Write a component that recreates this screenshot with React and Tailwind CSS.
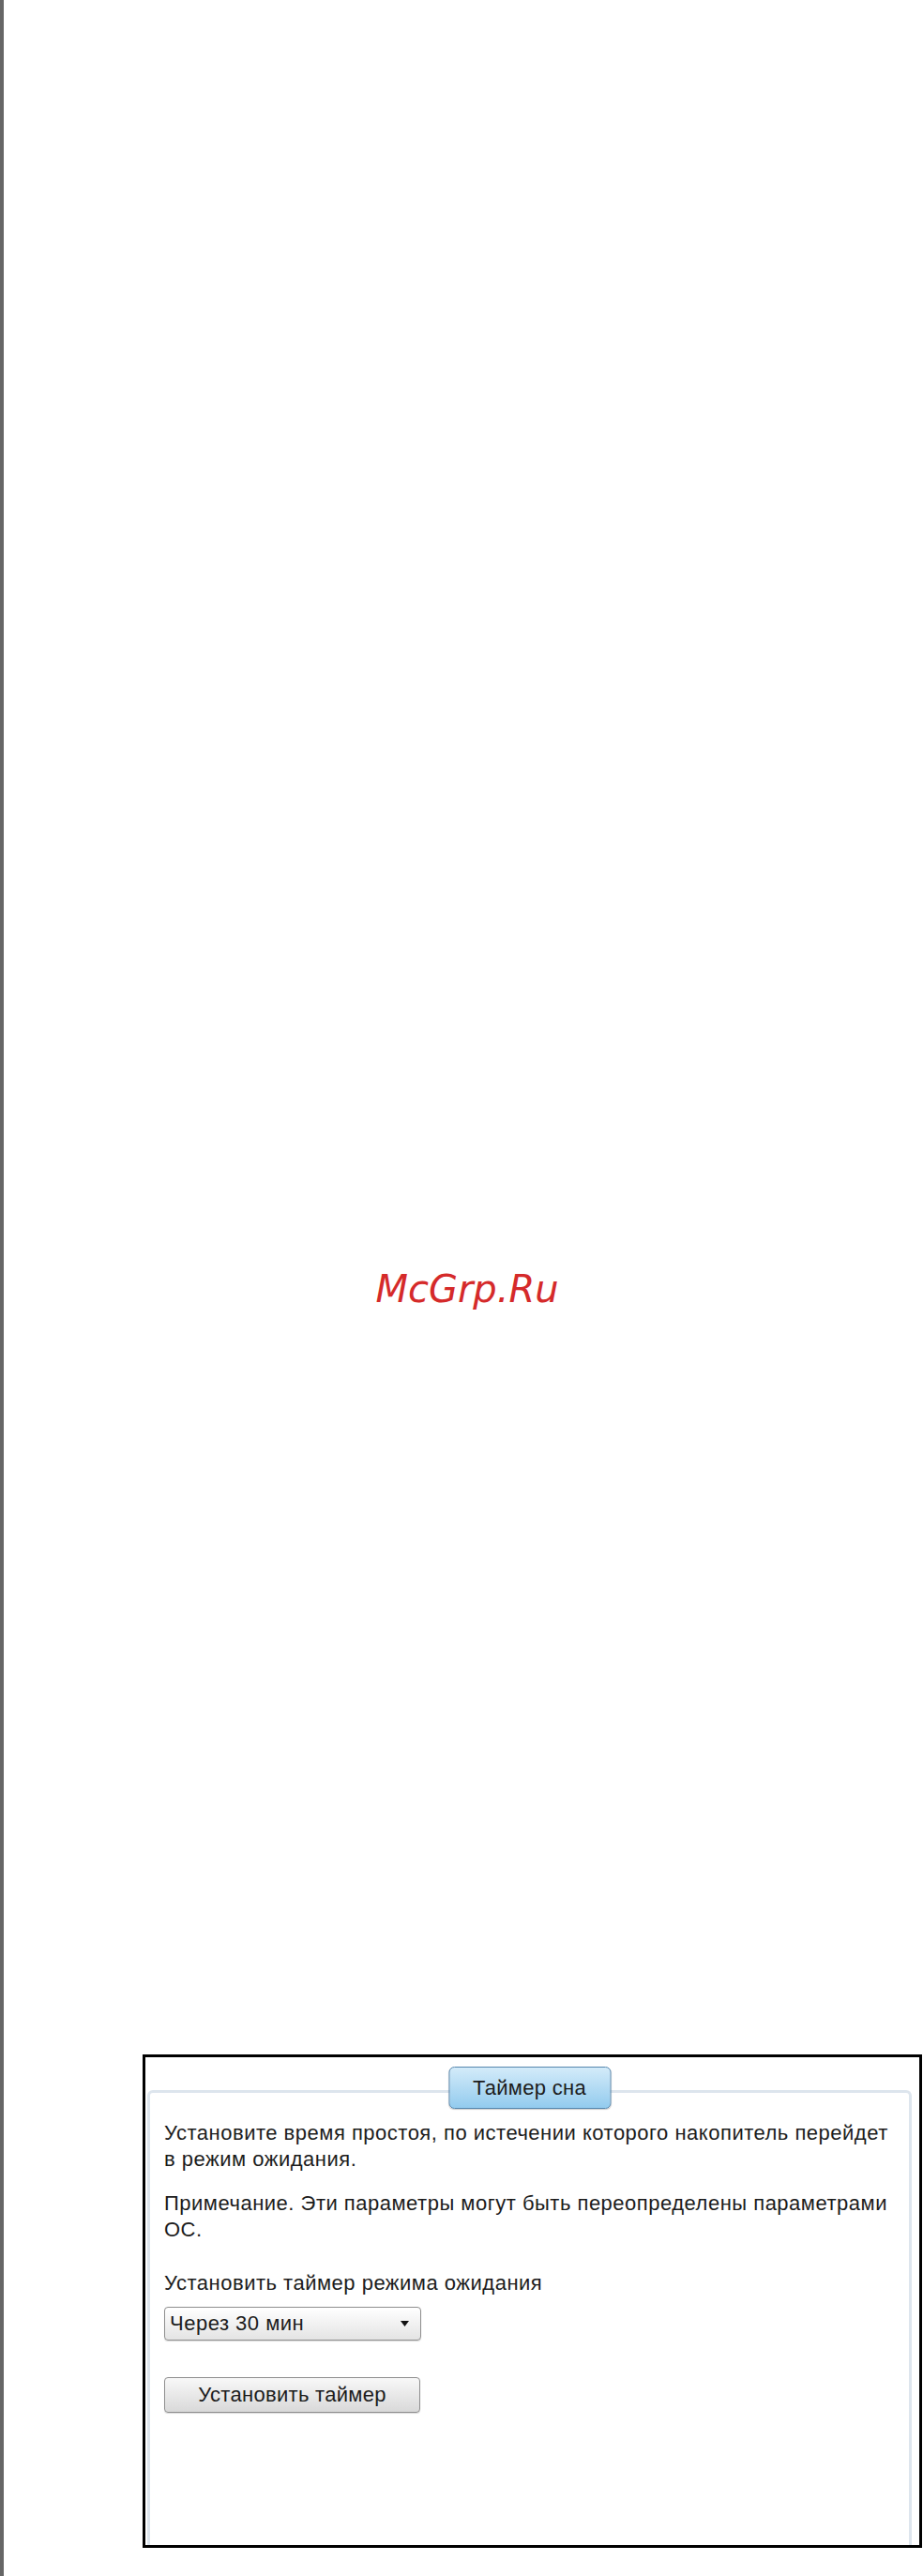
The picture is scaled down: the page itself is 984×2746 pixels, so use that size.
import React from 'react';

const SelectBox = ({ value }) => {
  return (
    <div className="mt-[11px] flex h-[36px] w-[274px] items-center justify-between rounded-[4px] border border-[#8f8f8f] bg-gradient-to-b from-[#ffffff] to-[#e4e4e4] pl-[5px] pr-[12px] shadow-[0_1px_1px_rgba(0,0,0,0.15)]">
      <span>{value}</span>
      <svg width="9" height="6" viewBox="0 0 9 6">
        <path d="M0 0 L9 0 L4.5 6 Z" fill="#111" />
      </svg>
    </div>
  );
};

const SleepTimerPanel = () => {
  return (
    <div className="ml-[148px] flex h-[526px] w-[831px] flex-col border-[3px] border-black bg-white">
      <div className="relative ml-[2px] mr-[8px] mt-[35px] flex-1 rounded-t-[6px] border-x-[3px] border-t-[3px] border-[#dde5ed] px-[15px] pt-[29px] text-[22px] leading-[28px] tracking-[0.5px] text-[#1c1c1c]">
        <div className="absolute left-1/2 top-[-28px] flex h-[45px] w-[173px] -translate-x-1/2 items-center justify-center rounded-[6px] border border-[#5687ae] bg-gradient-to-b from-[#d3ebf9] to-[#92cbee] tracking-[0.3px] shadow-[0_1px_1px_rgba(0,0,0,0.2)]">
          Таймер сна
        </div>

        <p>
          Установите время простоя, по истечении которого накопитель перейдет
          <br />
          в режим ожидания.
        </p>
        <p className="mt-[19px]">
          Примечание. Эти параметры могут быть переопределены параметрами
          <br />
          ОС.
        </p>
        <p className="mt-[29px]">Установить таймер режима ожидания</p>

        <SelectBox value="Через 30 мин" />

        <button className="mt-[39px] flex h-[38px] w-[273px] items-center justify-center rounded-[4px] border border-[#8f8f8f] bg-gradient-to-b from-[#f8f8f8] to-[#d9d9d9] tracking-[0.3px] shadow-[0_1px_1px_rgba(0,0,0,0.15)]">
          Установить таймер
        </button>
      </div>
    </div>
  );
};

const App = () => {
  return (
    <div className="flex h-[2746px] w-full bg-white font-['Liberation_Sans',Arial,sans-serif]">
      <div className="w-[4px] shrink-0 bg-[#666666]" />
      <div className="flex-1">
        <p className="pl-[8px] pt-[1354px] text-center font-['DejaVu_Sans',sans-serif] text-[40px] italic leading-[40px] text-[#d52a2a]">
          McGrp.Ru
        </p>
        <div className="mt-[796px]">
          <SleepTimerPanel />
        </div>
      </div>
    </div>
  );
};

export default App;
